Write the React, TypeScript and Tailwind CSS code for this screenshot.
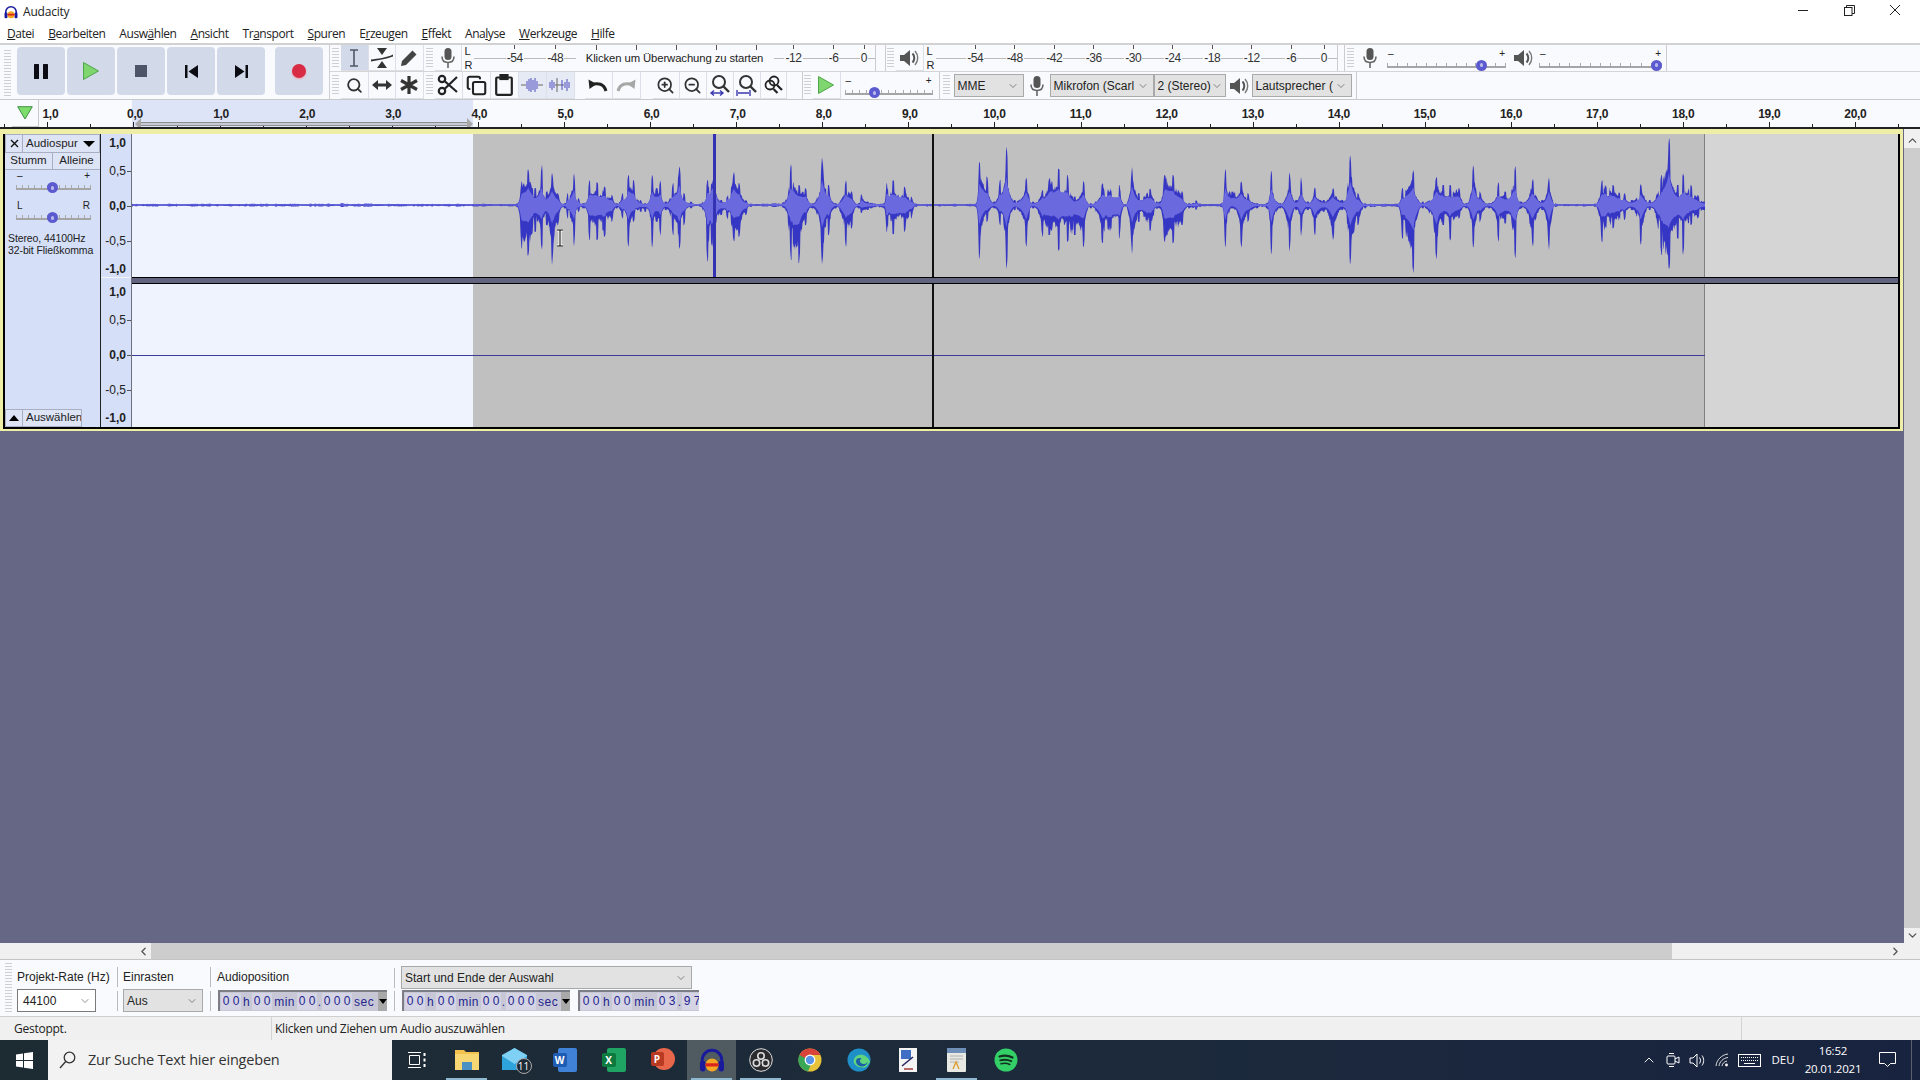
import React from 'react';
import { Copy, Search, ZoomIn, ZoomOut, ChevronDown, ChevronUp, ChevronLeft, ChevronRight } from 'lucide-react';

const MENU = ['Datei', 'Bearbeiten', 'Auswählen', 'Ansicht', 'Transport', 'Spuren', 'Erzeugen', 'Effekt', 'Analyse', 'Werkzeuge', 'Hilfe'];
const UNDERLINE: Record<string, number> = { Datei: 0, Bearbeiten: 0, Auswählen: 4, Ansicht: 0, Transport: 2, Spuren: 0, Erzeugen: 1, Effekt: 0, Analyse: 3, Werkzeuge: 0, Hilfe: 0 };

// peaks read off the reference: [x, top, bottom]
const PEAKS_A = [[-758,236,245],[-300,235,246],[80,236,245],[90,170,370],[105,130,395],[120,190,320],[135,118,375],[145,200,300],[157,140,425],[170,205,300],[185,235,250],[190,205,280],[205,142,368],[215,220,260],[225,235,250],[238,165,345],[255,172,345],[272,185,335],[288,210,290],[298,235,250],[310,205,280],[323,148,372],[335,165,290],[350,225,260],[360,235,260],[375,145,375],[385,190,290],[393,165,335],[405,230,255],[420,175,330],[435,120,375],[445,205,300],[460,230,250],[480,236,245],[495,165,410],[510,110,400],[525,225,270],[553,140,350],[565,175,335],[580,225,270],[590,236,245],[660,232,248],[677,115,405],[695,180,415],[710,190,300],[725,235,250],[745,95,420],[760,180,330],[775,235,250],[797,165,368],[810,200,310],[825,235,250],[830,205,265],[845,230,255],[880,235,250],[885,175,320],[900,165,328],[925,185,320],[940,215,280],[950,236,245],[1080,236,245],[1087,105,412],[1105,155,290],[1120,230,250],[1132,165,300],[1147,60,438],[1165,225,255],[1190,155,370],[1205,230,250],[1225,195,335],[1240,160,330],[1260,130,378],[1280,150,350],[1295,215,330],[1315,165,370],[1330,235,250],[1355,175,355],[1393,180,340],[1405,238,244],[1420,125,388],[1435,205,290],[1460,190,320],[1480,230,250],[1490,150,350],[1510,150,355],[1530,200,300],[1545,235,250],[1560,225,255]];
const PEAKS_B = [[1,236,245],[45,236,245],[55,125,378],[70,200,250],[90,168,372],[105,205,290],[125,235,250],[145,235,250],[155,130,398],[175,235,250],[195,140,382],[210,225,255],[220,155,335],[235,230,255],[250,185,335],[270,225,260],[290,188,348],[310,225,255],[327,85,425],[345,205,300],[360,235,250],[430,236,245],[440,190,340],[465,135,445],[485,230,250],[515,155,405],[530,180,300],[545,180,350],[565,190,280],[580,235,250],[595,115,375],[610,200,290],[630,235,250],[650,170,352],[665,200,295],[687,120,405],[700,230,250],[725,160,368],[745,225,255],[760,155,378],[775,236,245],[860,236,245],[875,165,355],[900,180,310],[925,205,285],[940,225,255],[960,175,365],[980,225,255],[1005,150,390],[1022,32,435],[1040,180,340],[1052,145,390],[1070,180,300],[1085,210,280],[1098,230,255]];

// rising edges stay low for longer and falling edges drop fast, so peaks come out narrow
const ease = (a: number, b: number, f: number) => {
  const s = b > a ? Math.pow(f, 2.3) : 1 - Math.pow(1 - f, 2.3);
  return a + (b - a) * s;
};

function buildWave() {
  const pts = [
    ...PEAKS_A.map(([x, t, b]) => [480 + x / 2.178 - 132, t / 3 - 9, b / 3 - 9]),
    ...PEAKS_B.map(([x, t, b]) => [1200 + x / 2.178 - 132, t / 3 - 9, b / 3 - 9]),
  ];
  const c = 71;
  let seed = 7;
  const rnd = () => {
    seed = (seed * 16807) % 2147483647;
    return seed / 2147483647;
  };
  const peakT: string[] = [], peakB: string[] = [], rmsT: string[] = [], rmsB: string[] = [];
  let j = 0;
  let block = 1;
  let blockEnd = 0;
  for (let x = 0; x <= 1573; x += 0.5) {
    while (j < pts.length - 2 && pts[j + 1][0] < x) j++;
    const [x0, t0, b0] = pts[j];
    const [x1, t1, b1] = pts[j + 1];
    const f = Math.min(1, Math.max(0, (x - x0) / (x1 - x0)));
    const up = ease(c - t0, c - t1, f);
    const dn = ease(b0 - c, b1 - c, f);
    if (x >= blockEnd) {
      block = 0.4 + rnd() * 0.6;
      blockEnd = x + 1 + rnd() * 2.5;
    }
    // the read-off peaks themselves keep their full height
    const atPeak = x - x0 < 1 || x1 - x < 1;
    const jagU = atPeak ? 1 : block * (0.75 + rnd() * 0.25);
    const jagD = atPeak ? 1 : block * (0.75 + rnd() * 0.25);
    peakT.push(`${x} ${(c - Math.max(0.8, up * jagU)).toFixed(1)}`);
    peakB.unshift(`${x} ${(c + Math.max(0.8, dn * jagD)).toFixed(1)}`);
    const rU = up * (0.3 + block * 0.22);
    const rD = dn * (0.22 + block * 0.16);
    rmsT.push(`${x} ${(c - rU).toFixed(1)}`);
    rmsB.unshift(`${x} ${(c + rD).toFixed(1)}`);
  }
  return { peak: 'M' + peakT.concat(peakB).join('L') + 'Z', rms: 'M' + rmsT.concat(rmsB).join('L') + 'Z' };
}
const WAVE = buildWave();

const Grip = ({ className = 'w-[11px]' }: { className?: string }) => (
  <div className={`${className} shrink-0 h-full flex justify-center py-[3px]`}>
    <div className="w-[7px] h-full bg-[repeating-linear-gradient(180deg,#cfcfcf_0_1px,transparent_1px_3px)]" />
  </div>
);

const Btn = ({ children, active, w = 'w-[27.5px]' }: { children?: React.ReactNode; active?: boolean; w?: string }) => (
  <div className={`${w} shrink-0 h-full flex items-center justify-center border-r border-b border-[#dcdfe8] ${active ? 'bg-[#d2dae9]' : ''}`}>
    {children}
  </div>
);

const TransportBtn = ({ children, className = '' }: { children: React.ReactNode; className?: string }) => (
  <div className={`w-[48px] h-[48px] rounded-[4px] bg-[#d2dae9] flex items-center justify-center ${className}`}>{children}</div>
);

const MicIcon = () => (
  <svg width="16" height="22" viewBox="0 0 16 22">
    <rect x="4.5" y="1" width="7" height="12" rx="3.5" fill="#555" />
    <path d="M2 9.5c0 4 2.5 6 6 6s6-2 6-6" fill="none" stroke="#666" strokeWidth="1.6" />
    <path d="M8 15.5V21" stroke="#666" strokeWidth="1.6" />
  </svg>
);

const SpeakerIcon = () => (
  <svg width="20" height="20" viewBox="0 0 20 20">
    <path d="M1 7h4l6-5v16l-6-5H1z" fill="#555" />
    <path d="M13.5 5.5c2.4 2.5 2.4 6.5 0 9" fill="none" stroke="#555" strokeWidth="2" />
    <path d="M16 3c3.6 4 3.6 10 0 14" fill="none" stroke="#777" strokeWidth="1.4" />
  </svg>
);

const Combo = ({ label, className }: { label: string; className: string }) => (
  <div className={`${className} shrink-0 h-[23px] bg-[#e2e2e2] border border-[#a9a9a9] flex items-center justify-between pl-[3px] pr-[4px] text-[12px] text-[#222] overflow-hidden whitespace-nowrap`}>
    <span>{label}</span>
    <ChevronDown size={12} strokeWidth={1} className="shrink-0" />
  </div>
);

const Slider = ({ w, thumb, left = '–', right = '+' }: { w: string; thumb: string; left?: string; right?: string }) => (
  <div className={`${w} shrink-0 flex flex-col`}>
    <div className="h-[10px] flex justify-between items-center text-[10px] leading-none text-[#222] px-[1px]">
      <span>{left}</span>
      <span>{right}</span>
    </div>
    <div className="relative h-[9px] flex flex-col justify-end">
      <div className="flex justify-between items-end h-[4px]">
        {Array.from({ length: 13 }).map((_, i) => (
          <div key={i} className="w-px h-[3px] bg-[#aaa]" />
        ))}
      </div>
      <div className="h-[2px] bg-[#a5a5a5]" />
      <div className={`absolute top-[1px] ${thumb} w-[11px] h-[11px] rounded-full bg-[#5b5bcf] flex items-center justify-center`}>
        <div className="w-[3px] h-[4px] rounded-full bg-[#b9b9ee]" />
      </div>
    </div>
  </div>
);

const LR = ({ className = 'w-[12px]' }: { className?: string }) => (
  <div className={`${className} shrink-0 h-full flex flex-col justify-center gap-[2px] text-[11px] leading-[12px] text-[#222] pl-[3px]`}>
    <span>L</span>
    <span>R</span>
  </div>
);

const MeterCell = ({ label, className = 'w-[40px]' }: { label: string; className?: string }) => (
  <div className={`${className} shrink-0 flex flex-col items-center h-full`}>
    <div className="w-px h-[5px] bg-[#555]" />
    <div className="w-full flex-1 flex items-center pb-[4px]">
      <div className="flex-1 h-px bg-[#bbb]" />
      <span className="text-[12px] tracking-[-0.4px] text-[#333] px-[1px]">{label}</span>
      <div className="flex-1 h-px bg-[#bbb]" />
    </div>
  </div>
);

const MeterEdge = ({ className }: { className: string }) => (
  <div className={`${className} shrink-0 h-full flex items-center pb-[0px]`}>
    <div className="w-full h-px bg-[#bbb]" />
  </div>
);

const TimeBox = ({ value, dropdown, w }: { value: string[]; dropdown?: boolean; w: string }) => (
  <div className={`${w} shrink-0 h-[21px] bg-[#c7c7d6] border-t-2 border-l-2 border-[#7d7d85] flex items-center text-[12px] text-[#24248f] overflow-hidden whitespace-nowrap`}>
    <div className="flex items-center pl-[1px] flex-1">
      {value.map((s, i) =>
        /\d/.test(s) ? (
          <span key={i} className="w-[10px] h-[17px] bg-[#d4d4e4] text-center leading-[17px]">{s}</span>
        ) : s === '.' ? (
          <span key={i} className="w-[5px] text-center">{s}</span>
        ) : (
          <span key={i} className="px-[2px] tracking-[0.5px]">{s}</span>
        ),
      )}
    </div>
    {dropdown && (
      <div className="w-[9px] h-full bg-[#a9a9a9] flex items-center justify-center shrink-0">
        <div className="w-0 h-0 border-x-[4px] border-x-transparent border-t-[5px] border-t-black" />
      </div>
    )}
  </div>
);

const TIME_0 = ['0', '0', 'h', '0', '0', 'min', '0', '0', '.', '0', '0', '0', 'sec'];
const TIME_E = ['0', '0', 'h', '0', '0', 'min', '0', '3', '.', '9', '7'];

const VRuler = ({ rows }: { rows: [string, string, boolean, boolean][] }) => (
  <div className="flex flex-col h-full">
    {rows.map(([label, mt, bold, tick]) => (
      <div key={label} className={`${mt} h-[18px] flex items-center justify-end leading-[18px] text-[12px] text-[#222] ${bold ? 'font-bold' : ''}`}>
        <span>{label}</span>
        <div className={`w-[4px] h-px ml-[1px] ${tick ? 'bg-[#555]' : 'bg-transparent'}`} />
      </div>
    ))}
  </div>
);

const RULER_ROWS: [string, string, boolean, boolean][] = [
  ['1,0', 'mt-0', true, false],
  ['0,5', 'mt-[10px]', false, true],
  ['0,0', 'mt-[17px]', true, true],
  ['-0,5', 'mt-[17px]', false, true],
  ['-1,0', 'mt-[10px]', true, false],
];

const Logo = ({ size = 14 }: { size?: number }) => (
  <svg width={size} height={size} viewBox="0 0 16 16">
    <path d="M2 10V8a6 6 0 0 1 12 0v2" fill="none" stroke="#1a1a9c" strokeWidth="1.8" />
    <rect x="0.6" y="8.5" width="3.4" height="6.5" rx="1.4" fill="#1a1a9c" />
    <rect x="12" y="8.5" width="3.4" height="6.5" rx="1.4" fill="#1a1a9c" />
    <ellipse cx="8" cy="11" rx="4" ry="4" fill="#f6a623" />
    <path d="M4 11h8" stroke="#d8261f" strokeWidth="2" />
  </svg>
);

const TaskIcon = ({ children, open, active }: { children: React.ReactNode; open?: boolean; active?: boolean }) => (
  <div className={`w-[49px] h-full shrink-0 flex flex-col ${active ? 'bg-[#4f5b60]' : ''}`}>
    <div className="flex-1 flex items-center justify-center pt-[2px]">{children}</div>
    <div className={`h-[2px] mx-[4px] ${open ? 'bg-[#8fb9d0]' : ''}`} />
  </div>
);

const OfficeIcon = ({ letter, tile, back }: { letter: string; tile: string; back: string }) => (
  <div className="relative w-[24px] h-[24px]">
    <div className={`w-[19px] h-[24px] ml-[5px] rounded-[2px] ${back}`} />
    <div className={`absolute left-0 top-[5px] w-[14px] h-[14px] rounded-[2px] ${tile} flex items-center justify-center text-[10px] font-bold text-white`}>{letter}</div>
  </div>
);

export default function App() {
  return (
    <div className="w-[1920px] h-[1080px] overflow-hidden flex flex-col bg-white [font-family:'Liberation_Sans',sans-serif]">
      {/* Title bar */}
      <div className="h-[24px] flex items-center pl-[4px] [font-family:'Open_Sans',sans-serif] text-[12px] text-[#222]">
        <Logo />
        <span className="ml-[5px] tracking-[-0.2px]">Audacity</span>
        <div className="ml-auto flex items-center text-[#222] pr-[2px] pb-[4px]">
          <div className="w-[46px] flex justify-center"><div className="w-[10px] h-px bg-[#222]" /></div>
          <div className="w-[46px] flex justify-center">
            <svg width="11" height="11" viewBox="0 0 11 11" fill="none" stroke="#222"><rect x="0.5" y="2.5" width="7.5" height="8" /><path d="M2.5 2.5v-2h8v8H8" /></svg>
          </div>
          <div className="w-[46px] flex justify-center">
            <svg width="12" height="12" viewBox="0 0 12 12" stroke="#222"><path d="M1 1l10 10M11 1L1 11" /></svg>
          </div>
        </div>
      </div>

      {/* Menu */}
      <div className="h-[19px] flex items-center pl-[7px] gap-[14px] [font-family:'Open_Sans',sans-serif] text-[12px] tracking-[-0.45px] text-[#222]">
        {MENU.map((m) => (
          <span key={m}>
            {m.split('').map((ch, i) => (
              <span key={i} className={UNDERLINE[m] === i ? 'underline' : ''}>{ch}</span>
            ))}
          </span>
        ))}
      </div>

      {/* Toolbars */}
      <div className="h-[57px] flex bg-[#f9fafd] border-t-2 border-t-[#d2d2d2] border-b border-b-[#c9c9c9] text-[#222]">
        <div className="w-[330px] shrink-0 flex items-start pt-[2px] border-r border-[#cfcfcf]">
          <Grip className="w-[15px]" />
          <div className="flex gap-[2px] ml-[2px]">
            <TransportBtn>
              <svg width="14" height="15" viewBox="0 0 14 15"><rect width="5" height="15" rx="0.5" fill="#0c0c14" /><rect x="9" width="5" height="15" rx="0.5" fill="#0c0c14" /></svg>
            </TransportBtn>
            <TransportBtn>
              <svg width="16" height="18" viewBox="0 0 16 18"><path d="M0.5 0.5L15.5 9L0.5 17.5Z" fill="#7fd66e" stroke="#4fa64a" /></svg>
            </TransportBtn>
            <TransportBtn>
              <div className="w-[12px] h-[12px] bg-[#4e5568]" />
            </TransportBtn>
            <TransportBtn>
              <svg width="13" height="13" viewBox="0 0 13 13" fill="#0c0c14"><rect width="2.5" height="13" /><path d="M13 0v13L3.5 6.5z" /></svg>
            </TransportBtn>
            <TransportBtn>
              <svg width="13" height="13" viewBox="0 0 13 13" fill="#0c0c14"><rect x="10.5" width="2.5" height="13" /><path d="M0 0v13l9.5-6.5z" /></svg>
            </TransportBtn>
            <TransportBtn className="ml-[8px]">
              <div className="w-[14px] h-[14px] rounded-full bg-[#d82c44] shadow-[0_1px_2px_#f0a0b0]" />
            </TransportBtn>
          </div>
        </div>

        <div className="flex-1 flex flex-col min-w-0">
          {/* Row 1 */}
          <div className="h-[27px] flex items-stretch border-b border-[#d5d5d5]">
            <div className="flex items-stretch w-[1007px] shrink-0">
              <Grip />
              <Btn active>
                <svg width="10" height="18" viewBox="0 0 10 18" fill="none" stroke="#4f5866" strokeWidth="1.6"><path d="M1 1h8M1 17h8M5 1v16" /></svg>
              </Btn>
              <Btn>
                <svg width="22" height="20" viewBox="0 0 22 20" fill="#333"><path d="M6 0h10l-5 7z" /><path d="M6 20h10l-5-7z" /><path d="M0 11.5C7 10.5 15 10 22 6.5v2C15 11 7 12 0 13.5z" /></svg>
              </Btn>
              <Btn>
                <svg width="18" height="18" viewBox="0 0 18 18" fill="#444"><path d="M12.5 1.5l4 4L6 16l-5 1 1-5z" /></svg>
              </Btn>
              <Grip className="w-[11px]" />
              <Btn w="w-[27px]"><MicIcon /></Btn>
              <LR />
              {/* Recording meter */}
              <div className="w-[402px] shrink-0 flex h-full border-r border-[#ccc]">
                <MeterEdge className="w-[21px]" />
                <MeterCell label="-54" className="w-[40.5px]" />
                <MeterCell label="-48" className="w-[40.5px]" />
                <div className="w-[198px] shrink-0 flex flex-col h-full">
                  <div className="h-[5px] flex pl-[20px] gap-[39px]">
                    {[0, 1, 2, 3, 4].map((i) => <div key={i} className="w-px h-[5px] bg-[#555]" />)}
                  </div>
                  <div className="flex-1 flex items-center justify-center pb-[4px] text-[11.3px] tracking-[-0.1px] text-[#222] whitespace-nowrap">
                    Klicken um Überwachung zu starten
                  </div>
                </div>
                <MeterCell label="-12" className="w-[40px]" />
                <MeterCell label="-6" className="w-[40px]" />
                <MeterCell label="0" className="w-[21px]" />
              </div>
              <div className="w-[10px] shrink-0 border-r border-[#ccc]" />
              <Grip className="w-[10px]" />
              <Btn w="w-[28px]"><SpeakerIcon /></Btn>
              <LR />
              {/* Playback meter */}
              <div className="flex-1 flex h-full border-r border-[#ccc]">
                <MeterEdge className="w-[20px]" />
                {['-54', '-48', '-42', '-36', '-30', '-24', '-18', '-12', '-6'].map((l) => (
                  <MeterCell key={l} label={l} className="w-[39.5px]" />
                ))}
                <MeterCell label="0" className="w-[26px]" />
              </div>
            </div>
            <div className="w-[8px] shrink-0 border-r border-[#ccc]" />
            <Grip className="w-[10px]" />
            <div className="w-[30px] shrink-0 flex items-center justify-center"><MicIcon /></div>
            <div className="ml-[2px] flex items-center"><Slider w="w-[119px]" thumb="left-[89px]" /></div>
            <div className="w-[33px] shrink-0 flex items-center justify-center"><SpeakerIcon /></div>
            <div className="flex items-center"><Slider w="w-[123px]" thumb="left-[112px]" /></div>
            <div className="w-[5px] shrink-0 border-r border-[#ccc]" />
          </div>

          {/* Row 2 */}
          <div className="h-[27px] flex items-stretch">
            <Grip />
            <Btn><Search size={17} strokeWidth={2.6} color="#333" /></Btn>
            <Btn>
              <svg width="20" height="12" viewBox="0 0 20 12" fill="#333"><path d="M0 6l6-5v3.5h8V1l6 5-6 5V7.5H6V11z" /></svg>
            </Btn>
            <Btn>
              <svg width="20" height="20" viewBox="0 0 20 20" stroke="#333" strokeWidth="3.2"><path d="M10 1v18M2 5.5l16 9M18 5.5l-16 9" /></svg>
            </Btn>
            <Grip className="w-[11px]" />
            <Btn w="w-[28px]">
              <svg width="22" height="22" viewBox="0 0 22 22" fill="none" stroke="#222" strokeWidth="2.2"><circle cx="5" cy="5" r="3.2" /><circle cx="5" cy="17" r="3.2" /><path d="M7.5 7L20 18M7.5 15L20 3" /></svg>
            </Btn>
            <Btn w="w-[28px]"><Copy size={21} strokeWidth={2.4} color="#222" /></Btn>
            <Btn w="w-[28px]">
              <svg width="18" height="22" viewBox="0 0 18 22" fill="none" stroke="#222" strokeWidth="2.2"><rect x="1.2" y="3.5" width="15.6" height="17.3" rx="1" /><rect x="5.5" y="1" width="7" height="4" fill="#222" /></svg>
            </Btn>
            <Btn w="w-[28px] bg-[#e6eaf4]">
              <svg width="22" height="16" viewBox="0 0 22 16" stroke="#4a4ac0" fill="none"><path d="M0 8h5M17 8h5" stroke="#666" /><path d="M6 4v8M8 2v12M10 1v14M12 3v10M14 1v14M16 4v8" /></svg>
            </Btn>
            <Btn w="w-[28px] bg-[#e6eaf4]">
              <svg width="22" height="16" viewBox="0 0 22 16" stroke="#4a4ac0" fill="none"><path d="M1 5v6M3 3v10M5 5v6M16 5v6M18 2v12M20 5v6" /><path d="M6 8h9" stroke="#666" /><path d="M8 1v14" stroke="#666" /><path d="M13 3v10" /></svg>
            </Btn>
            <div className="w-[10px] shrink-0" />
            <Btn w="w-[28px]">
              <svg width="20" height="14" viewBox="0 0 20 14" fill="none" stroke="#222" strokeWidth="3"><path d="M18 13C16 6 10 4 3 7" /><path d="M0.5 1.5L1.5 11l7-5z" fill="#222" stroke="none" /></svg>
            </Btn>
            <Btn w="w-[28px]">
              <svg width="20" height="14" viewBox="0 0 20 14" fill="none" stroke="#a7a7a7" strokeWidth="3"><path d="M2 13C4 6 10 4 17 7" /><path d="M19.5 1.5L18.5 11l-7-5z" fill="#a7a7a7" stroke="none" /></svg>
            </Btn>
            <div className="w-[12px] shrink-0" />
            <Btn w="w-[27px]"><ZoomIn size={19} strokeWidth={2.2} color="#333" /></Btn>
            <Btn w="w-[27px]"><ZoomOut size={19} strokeWidth={2.2} color="#333" /></Btn>
            <Btn w="w-[27px]">
              <svg width="22" height="22" viewBox="0 0 22 22" fill="none"><circle cx="10" cy="8" r="6" stroke="#333" strokeWidth="2" /><path d="M14 12l6 6" stroke="#333" strokeWidth="2.4" /><path d="M2 19h12M5 16.5L2 19l3 2.5M11 16.5l3 2.5-3 2.5" stroke="#3a3ab0" strokeWidth="1.4" /></svg>
            </Btn>
            <Btn w="w-[27px]">
              <svg width="22" height="22" viewBox="0 0 22 22" fill="none"><circle cx="10" cy="8" r="6" stroke="#333" strokeWidth="2" /><path d="M14 12l6 6" stroke="#333" strokeWidth="2.4" /><path d="M1 16v6M14 16v6M2 19h11" stroke="#3a3ab0" strokeWidth="1.4" /></svg>
            </Btn>
            <Btn w="w-[26px]">
              <svg width="20" height="20" viewBox="0 0 20 20" fill="none" stroke="#222" strokeWidth="1.8"><circle cx="7" cy="10" r="4.5" /><circle cx="11" cy="6" r="4.5" /><path d="M14 10l5 5M10.5 14l4 4" strokeWidth="2.2" /></svg>
            </Btn>
            <div className="w-[16px] shrink-0 border-r border-[#ccc]" />
            <Grip className="w-[10px]" />
            <Btn w="w-[28px]">
              <svg width="16" height="18" viewBox="0 0 16 18"><path d="M0.5 0.5L15.5 9L0.5 17.5Z" fill="#7fd66e" stroke="#4fa64a" /></svg>
            </Btn>
            <div className="ml-[4px] flex items-center"><Slider w="w-[88px]" thumb="left-[24px]" /></div>
            <div className="w-[7px] shrink-0 border-r border-[#ccc]" />
            <Grip className="w-[14px]" />
            <div className="flex items-center">
              <Combo label="MME" className="w-[70px]" />
              <div className="w-[26px] flex justify-center"><MicIcon /></div>
              <Combo label="Mikrofon (Scarl" className="w-[104px]" />
              <Combo label="2 (Stereo)" className="w-[72px]" />
              <div className="w-[26px] flex justify-center"><SpeakerIcon /></div>
              <Combo label="Lautsprecher (" className="w-[100px]" />
            </div>
            <div className="w-[5px] shrink-0 border-r border-[#ccc]" />
          </div>
        </div>
      </div>

      {/* Timeline ruler */}
      <div className="relative h-[29px] shrink-0 flex pl-[4.35px] overflow-hidden border-b-2 border-[#222] bg-[linear-gradient(90deg,#f9fafd_132px,#dee4f8_132px,#dee4f8_473px,#f9fafd_473px)]">
        {['1,0', '0,0', '1,0', '2,0', '3,0', '4,0', '5,0', '6,0', '7,0', '8,0', '9,0', '10,0', '11,0', '12,0', '13,0', '14,0', '15,0', '16,0', '17,0', '18,0', '19,0', '20,0', ''].map((l, i) => (
          <div key={i} className="w-[86.1px] shrink-0 flex flex-col h-full">
            <div className={`h-[24px] pt-[4px] flex items-center justify-center text-[12px] font-bold tracking-[-0.3px] text-[#222] ${i === 0 ? 'pl-[6px]' : i < 11 ? 'pl-[3px]' : ''}`}>{l}</div>
            <div className="h-[6px] -mt-[3px] flex items-end">
              <div className="w-px h-[3px] bg-[#222]" />
              <div className="flex-1" />
              <div className="w-px h-[5px] bg-[#222]" />
              <div className="flex-1" />
            </div>
          </div>
        ))}
        {/* start marker box */}
        <div className="absolute left-[12px] top-0 w-[27px] h-[27px] bg-[#f9fafd] border-r border-b border-[#c9c9c9] flex items-center justify-center">
          <svg width="16" height="14" viewBox="0 0 16 14"><path d="M0.7 0.7h14.6L8 13z" fill="#7edc6a" stroke="#3f8f46" /></svg>
        </div>
        {/* loop region */}
        <div className="absolute left-[135px] top-[18px] w-[338px] flex items-center">
          <div className="w-0 h-0 border-y-[6px] border-y-transparent border-r-[6px] border-r-[#a8a8a8]" />
          <div className="flex-1 h-[4px] bg-[#c6c9d6] border-y border-[#8f8f8f]" />
          <div className="w-0 h-0 border-y-[6px] border-y-transparent border-l-[6px] border-l-[#a8a8a8]" />
        </div>
      </div>

      {/* Track area */}
      <div className="h-[814px] shrink-0 flex bg-[#666785]">
        <div className="w-[1904px] shrink-0 flex flex-col">
          <div className="w-[1903px] h-[302px] shrink-0 border-[#eeeea6] border-t-[5px] border-x-[3px] border-b-[2px]">
            <div className="h-full flex border-x-2 border-b-2 border-black">
              {/* Track control panel */}
              <div className="w-[95px] shrink-0 h-full bg-[#d5dff8] flex flex-col text-[11px] text-[#222]">
                <div className="flex h-[19px] shrink-0">
                  <div className="w-[18px] bg-[#dde4f6] border border-[#a9afc2] flex items-center justify-center">
                    <svg width="9" height="9" viewBox="0 0 9 9" stroke="#111" strokeWidth="1.4"><path d="M1 1l7 7M8 1L1 8" /></svg>
                  </div>
                  <div className="flex-1 bg-[#dde4f6] border-y border-r border-[#a9afc2] flex items-center justify-between pl-[3px] pr-[4px] text-[11.5px]">
                    <span>Audiospur</span>
                    <div className="w-0 h-0 border-x-[6px] border-x-transparent border-t-[6px] border-t-black" />
                  </div>
                </div>
                <div className="flex h-[17px] shrink-0 border-b border-[#a9afc2]">
                  <div className="w-[48px] bg-[#dde4f6] border-r border-[#a9afc2] flex items-center justify-center text-[11.5px]">Stumm</div>
                  <div className="flex-1 bg-[#dde4f6] flex items-center justify-center text-[11.5px]">Alleine</div>
                </div>
                <div className="pl-[11px] mt-[1px]">
                  <Slider w="w-[75px]" thumb="left-[31px]" />
                </div>
                <div className="pl-[11px] mt-[11px]">
                  <Slider w="w-[75px]" thumb="left-[31px]" left="L" right="R" />
                </div>
                <div className="pl-[3px] mt-[12px] leading-[12px] text-[10.5px] tracking-[-0.1px] whitespace-nowrap">
                  <div>Stereo, 44100Hz</div>
                  <div>32-bit Fließkomma</div>
                </div>
                <div className="mt-auto flex h-[18px]">
                  <div className="w-[18px] bg-[#dde4f6] border border-[#a9afc2] flex items-center justify-center">
                    <div className="w-0 h-0 border-x-[5px] border-x-transparent border-b-[6px] border-b-black" />
                  </div>
                  <div className="w-[59px] bg-[#dde4f6] border-y border-r border-[#a9afc2] flex items-center pl-[3px] text-[11.5px] overflow-hidden whitespace-nowrap">Auswählen</div>
                </div>
              </div>

              {/* Vertical rulers */}
              <div className="w-[32px] shrink-0 h-full bg-[#d5dff8] border-l border-l-[#222] border-r border-r-[#6c7080] flex flex-col">
                <div className="h-[143px] shrink-0"><VRuler rows={RULER_ROWS} /></div>
                <div className="h-[7px] shrink-0 border-t border-[#f4f4f4]" />
                <div className="h-[143px] shrink-0 -mt-[1px]"><VRuler rows={RULER_ROWS} /></div>
              </div>

              {/* Waveforms */}
              <div className="flex-1 h-full flex flex-col min-w-0">
                <div className="relative h-[143px] shrink-0 flex">
                  <div className="w-[341px] bg-[#eff3fd]" />
                  <div className="w-[1232px] bg-[#c0c0c0] border-r border-[#808080]" />
                  <div className="flex-1 bg-[#d5d5d5]" />
                  <svg className="absolute left-0 top-0" width="1573" height="143" viewBox="0 0 1573 143">
                    <path d={WAVE.peak} fill="#3636c4" />
                    <path d={WAVE.rms} fill="#6a6ade" />
                  </svg>
                  <div className="absolute left-[800px] top-0 w-[2px] h-full bg-[#111]" />
                  <div className="absolute left-[581px] top-0 w-[3px] h-full bg-[#3333b4]" />
                  <svg className="absolute left-[424px] top-[95px]" width="8" height="18" viewBox="0 0 8 18" fill="none">
                    <path d="M1 1h6M1 17h6M4 1v16" stroke="#fff" strokeWidth="3" />
                    <path d="M1 1h6M1 17h6M4 1v16" stroke="#000" />
                  </svg>
                </div>
                <div className="h-[7px] shrink-0 bg-[#62637f] border-y border-black" />
                <div className="relative h-[143px] shrink-0 flex">
                  <div className="w-[341px] bg-[#eff3fd]" />
                  <div className="w-[1232px] bg-[#c0c0c0] border-r border-[#808080]" />
                  <div className="flex-1 bg-[#d5d5d5]" />
                  <div className="absolute left-0 top-[71px] w-[1573px] h-px bg-[#3c3c98]" />
                  <div className="absolute left-[800px] top-0 w-[2px] h-full bg-[#111]" />
                </div>
              </div>
            </div>
          </div>
        </div>
        {/* Vertical scrollbar */}
        <div className="flex-1 bg-[#f0f0f0] flex flex-col items-center">
          <div className="h-[16px] shrink-0 flex items-center justify-center pt-[6px]"><ChevronUp size={13} strokeWidth={2.4} color="#555" /></div>
          <div className="w-full h-[780px] mt-[3px] bg-[#cdcdcd]" />
          <div className="flex-1 flex items-center justify-center"><ChevronDown size={13} strokeWidth={2.4} color="#555" /></div>
        </div>
      </div>

      {/* Horizontal scrollbar */}
      <div className="h-[17px] shrink-0 bg-[#f0f0f0] flex items-center border-b border-[#c4c4c4]">
        <div className="w-[151px] shrink-0 flex justify-end pr-[1px]"><ChevronLeft size={13} strokeWidth={2.4} color="#555" /></div>
        <div className="w-[1521px] shrink-0 h-full bg-[#cdcdcd]" />
        <div className="flex-1 flex justify-end pr-[18px]"><ChevronRight size={13} strokeWidth={2.4} color="#555" /></div>
      </div>

      {/* Selection toolbar */}
      <div className="h-[57px] shrink-0 bg-[#f9fafd] flex text-[12px] text-[#222] border-b border-[#cfcfcf]">
        <Grip className="w-[17px]" />
        <div className="w-[100px] shrink-0 flex flex-col">
          <div className="h-[29px] pt-[5px] flex items-center whitespace-nowrap">Projekt-Rate (Hz)</div>
          <div className="w-[79px] h-[23px] bg-white border border-[#7a7a7a] flex items-center justify-between pl-[5px] pr-[4px]">
            <span>44100</span>
            <ChevronDown size={12} strokeWidth={1} />
          </div>
        </div>
        <div className="w-[93px] shrink-0 flex flex-col">
          <div className="h-[29px] pt-[5px] flex items-center">
            <div className="w-px h-[20px] bg-[#bbb] mr-[5px]" />
            <span>Einrasten</span>
          </div>
          <div className="flex items-center h-[23px]">
            <div className="w-px h-[20px] bg-[#bbb] mr-[5px]" />
            <Combo label="Aus" className="w-[80px]" />
          </div>
        </div>
        <div className="w-[184px] shrink-0 flex flex-col">
          <div className="h-[29px] pt-[5px] flex items-center">
            <div className="w-px h-[20px] bg-[#bbb] mr-[6px]" />
            <span>Audioposition</span>
          </div>
          <div className="flex items-center h-[23px]">
            <div className="w-px h-[20px] bg-[#bbb] mr-[7px]" />
            <TimeBox value={TIME_0} dropdown w="w-[169px]" />
          </div>
        </div>
        <div className="flex flex-col">
          <div className="h-[29px] pt-[6px] flex items-center">
            <div className="w-px h-[20px] bg-[#bbb] mr-[6px]" />
            <Combo label="Start und Ende der Auswahl" className="w-[291px]" />
          </div>
          <div className="flex items-center h-[23px]">
            <div className="w-px h-[20px] bg-[#bbb] mr-[7px]" />
            <TimeBox value={TIME_0} dropdown w="w-[168px]" />
            <TimeBox value={TIME_E} w="w-[121px] ml-[8px]" />
          </div>
        </div>
      </div>

      {/* Status bar */}
      <div className="h-[23px] shrink-0 bg-[#f0f0f0] flex items-center text-[12px] text-[#222] [font-family:'Open_Sans',sans-serif] tracking-[-0.25px]">
        <div className="w-[272px] shrink-0 h-full flex items-center pl-[14px] border-r border-[#d4d4d4]">Gestoppt.</div>
        <div className="w-[1470px] shrink-0 h-full flex items-center pl-[3px] border-r border-[#d4d4d4]">Klicken und Ziehen um Audio auszuwählen</div>
      </div>

      {/* Taskbar */}
      <div className="h-[40px] shrink-0 flex items-stretch bg-[linear-gradient(90deg,#1d2c33,#1c2a3c_60%,#18233f)] text-white [font-family:'Open_Sans',sans-serif]">
        <div className="w-[48px] shrink-0 flex items-center justify-center">
          <svg width="17" height="17" viewBox="0 0 17 17" fill="#fff"><path d="M0 2.4L7 1.4V8H0z" /><path d="M8 1.2L17 0v8H8z" /><path d="M0 9h7v6.6L0 14.6z" /><path d="M8 9h9v8L8 15.8z" /></svg>
        </div>
        <div className="w-[344px] shrink-0 bg-[#f2f2f2] flex items-center text-[#333] text-[14.5px] tracking-[-0.2px]">
          <svg className="ml-[11px] mr-[12px]" width="17" height="18" viewBox="0 0 17 18" fill="none" stroke="#333" strokeWidth="1.3"><circle cx="10.5" cy="6.5" r="5.3" /><path d="M6.7 10.5L1 17" /></svg>
          <span>Zur Suche Text hier eingeben</span>
        </div>
        <div className="w-[50px] shrink-0 flex items-center justify-center">
          <svg width="18" height="18" viewBox="0 0 18 18" fill="none" stroke="#fff"><path d="M0 1.5h13M0 16.5h13M1.5 4.5h10v9h-10z" /><path d="M16.5 2v3M16.5 7.5v3M16.5 13v3" strokeWidth="2" /></svg>
        </div>
        <TaskIcon open>
          <svg width="24" height="22" viewBox="0 0 24 22"><path d="M0 1h9l2 2h13v18H0z" fill="#f2c14e" /><rect x="0" y="5" width="24" height="16" fill="#f7d774" /><rect x="7" y="13" width="10" height="8" fill="#4a90c2" /></svg>
        </TaskIcon>
        <TaskIcon>
          <div className="relative w-[28px] h-[24px]">
            <svg width="25" height="22" viewBox="0 0 25 22"><path d="M0 8L12.5 0 25 8v14H0z" fill="#2fa4dc" /><path d="M0 8l12.5 8L25 8v-1L12.5 0 0 7z" fill="#7fd0f5" /></svg>
            <div className="absolute right-[-2px] bottom-[-2px] w-[16px] h-[16px] rounded-full bg-[#1d2b36] border border-[#aaa] flex items-center justify-center text-[10px] leading-none">11</div>
          </div>
        </TaskIcon>
        <TaskIcon><OfficeIcon letter="W" tile="bg-[#1f5cb4]" back="bg-[#3f82d8]" /></TaskIcon>
        <TaskIcon><OfficeIcon letter="X" tile="bg-[#0f7a40]" back="bg-[#1fa463]" /></TaskIcon>
        <TaskIcon>
          <div className="relative w-[24px] h-[24px]">
            <div className="w-[22px] h-[22px] ml-[2px] rounded-full bg-[#e8664a]" />
            <div className="absolute left-0 top-[4px] w-[13px] h-[14px] rounded-[2px] bg-[#b93a22] flex items-center justify-center text-[10px] font-bold">P</div>
          </div>
        </TaskIcon>
        <TaskIcon open active><Logo size={26} /></TaskIcon>
        <TaskIcon open>
          <svg width="24" height="24" viewBox="0 0 24 24"><circle cx="12" cy="12" r="11.3" fill="#2b2b2f" stroke="#ddd" /><circle cx="12" cy="8" r="3.2" fill="none" stroke="#ddd" strokeWidth="1.6" /><circle cx="7.5" cy="15" r="3.2" fill="none" stroke="#ddd" strokeWidth="1.6" /><circle cx="16.5" cy="15" r="3.2" fill="none" stroke="#ddd" strokeWidth="1.6" /></svg>
        </TaskIcon>
        <TaskIcon>
          <svg width="24" height="24" viewBox="0 0 24 24"><circle cx="12" cy="12" r="11.5" fill="#e8c33a" /><path d="M12 .5A11.5 11.5 0 0 1 22.5 7H12z" fill="#d8433a" /><path d="M1.5 7A11.5 11.5 0 0 1 12 .5L12 7 7 16z" fill="#d8433a" /><path d="M1.5 7A11.5 11.5 0 0 0 10 23.4L14 14z" fill="#3aa757" /><circle cx="12" cy="12" r="5.4" fill="#fff" /><circle cx="12" cy="12" r="4.2" fill="#5a94e8" /></svg>
        </TaskIcon>
        <TaskIcon>
          <svg width="24" height="24" viewBox="0 0 24 24"><circle cx="12" cy="12" r="11.5" fill="#1f8fc8" /><path d="M23 14C21 6 10 4 7 11c-2 6 5 10 12 8" fill="#5fd67e" /><path d="M9 13c0-3 4-4 6-2-2 0-3 2-1 4s5 1 7-1c-3 7-12 5-12-1z" fill="#1a5fa8" /></svg>
        </TaskIcon>
        <TaskIcon>
          <svg width="18" height="24" viewBox="0 0 18 24"><rect width="18" height="24" fill="#f4f4f4" /><rect x="2" y="2" width="10" height="9" fill="#3e6fc4" /><path d="M3 18L14 9" stroke="#2a2a60" strokeWidth="1.6" /><path d="M5 21h9" stroke="#a03030" strokeWidth="1.4" /></svg>
        </TaskIcon>
        <TaskIcon open>
          <svg width="19" height="24" viewBox="0 0 19 24"><rect width="19" height="24" rx="1" fill="#e9e9e4" /><rect y="0" width="19" height="5" fill="#6f8fb8" /><path d="M3 8h13M3 11h13M3 14h9" stroke="#b0b0b0" /><path d="M6 21l3-7 3 7" stroke="#e0a030" fill="none" strokeWidth="1.4" /></svg>
        </TaskIcon>
        <TaskIcon>
          <svg width="24" height="24" viewBox="0 0 24 24" fill="none"><circle cx="12" cy="12" r="11.5" fill="#33d068" /><path d="M5.5 8.5c4.5-1.3 9-1 13 1" stroke="#14301f" strokeWidth="2.2" strokeLinecap="round" /><path d="M6.2 12.3c3.8-1 7.6-.8 11 .9" stroke="#14301f" strokeWidth="1.9" strokeLinecap="round" /><path d="M7 15.8c3-.8 6-.6 8.8.7" stroke="#14301f" strokeWidth="1.6" strokeLinecap="round" /></svg>
        </TaskIcon>

        {/* Tray */}
        <div className="ml-auto flex items-center text-[12px]">
          <div className="w-[24px] flex justify-center"><ChevronUp size={16} strokeWidth={1.4} /></div>
          <div className="w-[24px] flex justify-center">
            <svg width="14" height="16" viewBox="0 0 14 16" fill="none" stroke="#fff"><rect x="1" y="4" width="8" height="8" rx="1" /><path d="M9 7l4-2v6l-4-2" /><path d="M3 1.5h5M3 14.5h5" /></svg>
          </div>
          <div className="w-[24px] flex justify-center">
            <svg width="17" height="15" viewBox="0 0 17 15" fill="none" stroke="#fff"><path d="M1 5h3l4-4v13l-4-4H1z" /><path d="M10.5 4.5c1.3 1.7 1.3 4.3 0 6M13 2.5c2.2 3 2.2 7 0 10" /></svg>
          </div>
          <div className="w-[26px] flex justify-center">
            <svg width="14" height="14" viewBox="0 0 14 14" fill="none" stroke="#ddd"><path d="M1 13C1.5 7 7 1.5 13 1M4 13C4.5 9 8 5 13 4.5M7 13c.3-2.4 2.5-4.6 5-5" /><circle cx="11.5" cy="12" r="1.4" fill="#fff" stroke="none" /></svg>
          </div>
          <div className="w-[28px] flex justify-center">
            <div className="w-[23px] h-[13px] border border-white flex flex-col justify-center items-center gap-[2px]">
              <div className="w-[17px] h-px bg-[repeating-linear-gradient(90deg,#fff_0_1px,transparent_1px_2px)]" />
              <div className="w-[17px] h-px bg-[repeating-linear-gradient(90deg,#fff_0_1px,transparent_1px_2px)]" />
              <div className="w-[11px] h-px bg-white" />
            </div>
          </div>
          <div className="w-[40px] text-center text-[11.5px]">DEU</div>
          <div className="w-[60px] flex flex-col items-center leading-[18px] text-[11.5px] tracking-[-0.2px]">
            <span>16:52</span>
            <span>20.01.2021</span>
          </div>
          <div className="w-[48px] flex justify-center">
            <svg width="17" height="16" viewBox="0 0 17 16" fill="none" stroke="#fff"><path d="M.5.5h16v11h-5l-3 3-3-3h-5z" /></svg>
          </div>
          <div className="w-[9px] h-full flex"><div className="w-px h-full bg-[#5a6070]" /></div>
        </div>
      </div>
    </div>
  );
}
